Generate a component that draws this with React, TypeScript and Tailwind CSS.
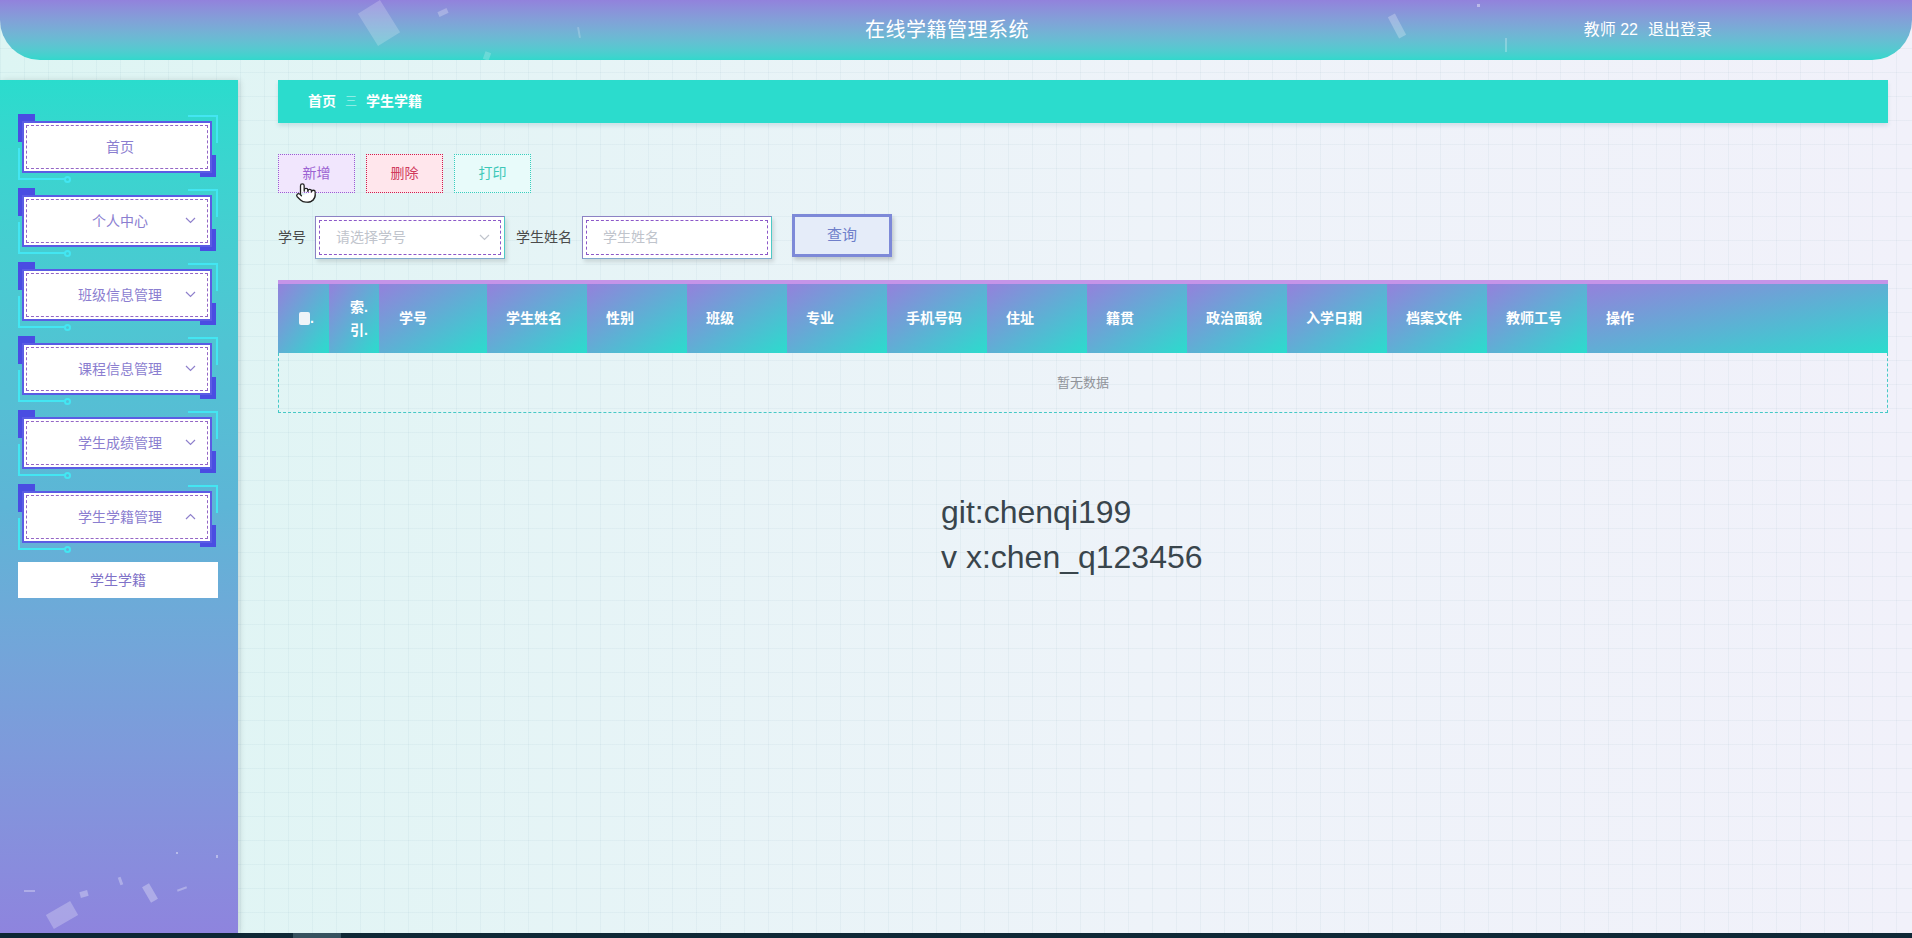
import React from 'react';
import { Pointer } from 'lucide-react';

const menus: { label: string; arrow: 'none' | 'down' | 'up' }[] = [
  { label: '首页', arrow: 'none' },
  { label: '个人中心', arrow: 'down' },
  { label: '班级信息管理', arrow: 'down' },
  { label: '课程信息管理', arrow: 'down' },
  { label: '学生成绩管理', arrow: 'down' },
  { label: '学生学籍管理', arrow: 'up' },
];

const columns = [
  '学生姓名', '性别', '班级', '专业', '手机号码', '住址',
  '籍贯', '政治面貌', '入学日期', '档案文件', '教师工号',
];

const thBg = 'bg-[linear-gradient(to_bottom_right,#9481dc,#2bdccd)]';

const Chevron = ({ up = false, color = '#8f80cc' }: { up?: boolean; color?: string }) => (
  <svg width="11" height="7" viewBox="0 0 11 7" fill="none">
    <path d={up ? 'M1 6l4.5-4.5L10 6' : 'M1 1l4.5 4.5L10 1'} stroke={color} strokeWidth="1.2" />
  </svg>
);

const MenuItem = ({ label, arrow }: { label: string; arrow: 'none' | 'down' | 'up' }) => (
  <div className="relative h-[74px] pt-[7px]">
    {/* corner decorations */}
    <div className="absolute left-[18px] top-0 w-[17px] h-[28px] bg-[#4a4de2]" />
    <div className="absolute left-[200px] top-[41px] w-[16px] h-[22px] bg-[#4a4de2]" />
    <div className="absolute left-[188px] top-[1px] w-[30px] h-[28px] border-t-2 border-r-2 border-[#43e6f2]" />
    <div className="absolute left-[18px] top-[34px] w-[48px] h-[32px] border-l-2 border-b-2 border-[#43e6f2]" />
    <div className="absolute left-[64px] top-[62px] w-[7px] h-[7px] rounded-full border-2 border-[#43e6f2]" />
    <div className="relative ml-[22px] w-[190px] h-[52px] bg-white border-2 border-[#5b5ce4] flex items-center justify-center">
      <div className="absolute inset-[2px] border border-dashed border-[#9466c6]" />
      <span className="text-[14px] text-[#8b7ed0] pl-[6px]">{label}</span>
      {arrow !== 'none' && (
        <span className="absolute right-[14px] top-[20px]">
          <Chevron up={arrow === 'up'} />
        </span>
      )}
    </div>
  </div>
);

const Sidebar = () => (
  <aside className="relative w-[238px] h-full shrink-0 pt-[34px] bg-gradient-to-b from-[#2adccd] via-[#5db5d6] to-[#8e84de] shadow-[2px_0_6px_rgba(0,0,0,0.12)]">
    {menus.map(m => (
      <MenuItem key={m.label} label={m.label} arrow={m.arrow} />
    ))}
    <div className="ml-[18px] mt-[4px] w-[200px] h-[36px] bg-white flex items-center justify-center text-[14px] text-[#7f72c8]">
      学生学籍
    </div>
    {/* floating confetti at the bottom */}
    <div className="absolute left-[48px] top-[827px] w-[28px] h-[16px] bg-white/25 -rotate-[30deg]" />
    <div className="absolute left-[80px] top-[811px] w-[8px] h-[6px] bg-white/30 -rotate-[15deg]" />
    <div className="absolute left-[146px] top-[804px] w-[8px] h-[18px] bg-white/30 -rotate-[30deg]" />
    <div className="absolute left-[24px] top-[810px] w-[11px] h-[2px] bg-white/30" />
    <div className="absolute left-[119px] top-[797px] w-[3px] h-[8px] bg-white/30 -rotate-[20deg]" />
    <div className="absolute left-[177px] top-[808px] w-[10px] h-[2px] bg-white/30 -rotate-[20deg]" />
    <div className="absolute left-[176px] top-[772px] w-[2px] h-[2px] bg-white/40" />
    <div className="absolute left-[216px] top-[775px] w-[2px] h-[3px] bg-white/40" />
  </aside>
);

const Header = () => (
  <header className="relative h-[60px] shrink-0 rounded-b-[40px] bg-gradient-to-b from-[#9282dc] to-[#30d8cc] grid grid-cols-[1fr_auto_1fr] items-center overflow-hidden">
    <div className="absolute left-[366px] top-[4px] w-[26px] h-[38px] bg-white/20 -rotate-[32deg]" />
    <div className="absolute left-[438px] top-[10px] w-[10px] h-[5px] bg-white/25 -rotate-[25deg]" />
    <div className="absolute left-[578px] top-[27px] w-[2px] h-[11px] bg-white/20 -rotate-[10deg]" />
    <div className="absolute left-[484px] top-[52px] w-[6px] h-[8px] bg-white/20 rotate-[20deg]" />
    <div className="absolute left-[1393px] top-[14px] w-[8px] h-[24px] bg-white/25 -rotate-[28deg]" />
    <div className="absolute left-[1477px] top-[4px] w-[3px] h-[3px] bg-white/40" />
    <div className="absolute left-[1505px] top-[38px] w-[2px] h-[14px] bg-white/25" />
    <div />
    <h1 className="pr-[18px] text-[20px] text-white tracking-[0.5px]">在线学籍管理系统</h1>
    <div className="flex justify-end pr-[200px] text-[16px] text-white gap-[10px]">
      <span>教师 22</span>
      <span>退出登录</span>
    </div>
  </header>
);

const Toolbar = () => (
  <div className="flex gap-[11px] mt-[31px] relative">
    <button className="w-[77px] h-[39px] bg-[#f1e6fd] border border-dotted border-[#9a5fd2] text-[#9b62d2] text-[14px]">新增</button>
    <button className="w-[77px] h-[39px] bg-[#ffe6ec] border border-dotted border-[#cf1e4e] text-[#d03a5c] text-[14px]">删除</button>
    <button className="w-[77px] h-[39px] bg-[#e8fbfa] border border-dotted border-[#38cdbd] text-[#3dc8b8] text-[14px]">打印</button>
    <Pointer className="absolute left-[17px] top-[28px]" size={22} strokeWidth={1.4} color="#222" fill="#fff" />
  </div>
);

const Field = ({ placeholder, select = false }: { placeholder: string; select?: boolean }) => (
  <div className="relative w-[190px] h-[43px] bg-white border border-[#8c82c4] border-r-[#4dc9c6] border-b-[#7fa9cc] shadow-[2px_3px_4px_rgba(0,0,0,0.12)] flex items-center pl-[20px] pr-[14px]">
    <div className="absolute inset-[3px] border border-dashed border-[#8c58c8]" />
    <span className="flex-1 text-[14px] text-[#c0c4cc]">{placeholder}</span>
    {select && <Chevron color="#c0c4cc" />}
  </div>
);

const SearchBar = () => (
  <div className="flex items-center mt-[23px] text-[14px] text-[#4a4a4a]">
    <span>学号</span>
    <div className="ml-[9px]"><Field placeholder="请选择学号" select /></div>
    <span className="ml-[11px]">学生姓名</span>
    <div className="ml-[10px]"><Field placeholder="学生姓名" /></div>
    <button className="ml-[20px] -mt-[4px] w-[100px] h-[43px] bg-[#e5ecf9] border-[3px] border-[#7d89d8] shadow-[2px_3px_4px_rgba(0,0,0,0.18)] text-[15px] text-[#6f7fca]">
      查询
    </button>
  </div>
);

const Table = () => (
  <div className="mt-[21px] w-[1610px] border-t-4 border-[#c594e8]">
    <div className="flex h-[69px] text-white text-[14px] font-bold">
      <div className={`w-[51px] ${thBg} flex items-center pl-[21px]`}>
        <span className="w-[11px] h-[13px] bg-[#eef4f8] rounded-[2px]" />
        <span>.</span>
      </div>
      <div className={`w-[50px] ${thBg} flex flex-col justify-center pl-[21px] leading-[23px] whitespace-nowrap`}>
        <span>索.</span>
        <span>引.</span>
      </div>
      <div className={`w-[108px] ${thBg} flex items-center pl-[20px]`}>学号</div>
      {columns.map(c => (
        <div key={c} className={`w-[100px] ${thBg} flex items-center pl-[19px]`}>{c}</div>
      ))}
      <div className={`w-[301px] ${thBg} flex items-center pl-[19px]`}>操作</div>
    </div>
    <div className="h-[60px] border border-t-0 border-dashed border-[#45c9c6] flex items-center justify-center text-[13px] text-[#909399]">
      暂无数据
    </div>
  </div>
);

const App: React.FC = () => {
  return (
    <div className="w-[1912px] h-[938px] flex flex-col overflow-hidden font-['Liberation_Sans','Noto_Sans_CJK_SC',sans-serif] bg-[linear-gradient(rgba(110,150,170,0.07)_1px,transparent_1px),linear-gradient(90deg,rgba(110,150,170,0.07)_1px,transparent_1px),linear-gradient(90deg,#ddf5f3,#eef3f9_60%,#f1f1fa)] bg-[size:24px_24px,24px_24px,100%_100%]">
      <Header />

      <div className="flex flex-1 min-h-0 pt-[20px]">
        <Sidebar />

        <main className="ml-[40px] w-[1610px] flex flex-col">
          {/* Breadcrumb */}
          <div className="h-[43px] bg-[#2bdccd] shadow-[0_3px_4px_rgba(60,120,140,0.15)] flex items-center pl-[30px] gap-[9px] text-[14px] text-white">
            <span className="font-bold">首页</span>
            <span className="text-white/80 font-light text-[12px]">三</span>
            <span className="font-semibold">学生学籍</span>
          </div>

          <Toolbar />
          <SearchBar />
          <Table />

          {/* watermark */}
          <div className="mt-[77px] ml-[663px] text-[32px] leading-[45px] text-[#39454c] font-['Liberation_Sans',sans-serif]">
            <div>git:chenqi199</div>
            <div>v x:chen_q123456</div>
          </div>
        </main>
      </div>

      <div className="h-[5px] shrink-0 bg-[#0f2836] flex">
        <div className="ml-[293px] w-[48px] bg-[#36515e]" />
      </div>
    </div>
  );
};

export default App;
